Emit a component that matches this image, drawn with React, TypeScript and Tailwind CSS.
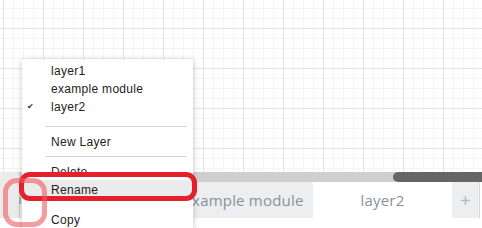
import { Plus } from "lucide-react";

const layers = ["layer1", "example module", "layer2"];
const active = "layer2";

const gridBg =
  "[background-image:linear-gradient(to_right,#e4e4e4_1px,transparent_1px),linear-gradient(to_bottom,#e4e4e4_1px,transparent_1px),linear-gradient(to_right,#f4f4f4_1px,transparent_1px),linear-gradient(to_bottom,#f4f4f4_1px,transparent_1px)] [background-size:40px_40px,40px_40px,10px_10px,10px_10px] [background-position:3px_28px,3px_28px,3px_8px,3px_8px]";

const MenuItem = ({ label, checked, hover, className = "h-[18px]" }: { label: string; checked?: boolean; hover?: boolean; className?: string }) => (
  <div className={`relative flex items-center pl-[29px] ${className} ${hover ? "bg-[#ebebeb]" : ""}`}>
    {checked && <span className="absolute left-[5px] text-[8px] text-[#333]">✔</span>}
    <span>{label}</span>
  </div>
);

const Separator = ({ className }: { className: string }) => (
  <div className={`ml-[24px] mr-[7px] h-px bg-[#d0d0d0] ${className}`} />
);

const App = () => {
  return (
    <div className="relative w-[482px] h-[228px] overflow-hidden bg-white font-['Liberation_Sans',Arial,sans-serif]">
      <div className={`h-[172px] ${gridBg}`} />

      <div className="flex h-[46px]">
        <div className="relative w-[20px] bg-[#ebebeb] border-r border-[#cfcfcf]">
          <div className="absolute right-[-2px] top-[25px] w-[2px] h-[7px] bg-[#aaaaaa]" />
        </div>
        <div className="flex-1 flex flex-col">
          <div className="h-[10px] bg-[#cfcfcf] flex justify-end">
            <div className="w-[89px] bg-[#666666] rounded-l-full" />
          </div>
          <div className="flex-1 flex bg-[#eceef0] font-['Open_Sans',sans-serif] text-[15px] tracking-[0.2px] text-[#8a9298]">
            {layers.map((name, i) => (
              <div
                key={name}
                className={`flex items-center justify-center ${i === 0 ? "flex-1" : "w-[139px]"} ${name === active ? "bg-white" : ""}`}
              >
                {name}
              </div>
            ))}
            <div className="w-[28px] flex items-center justify-center border-r border-[#dcdcdc] text-[#b8bcc0]">
              <Plus size={13} strokeWidth={3} />
            </div>
            <div className="w-[2px] bg-white" />
          </div>
        </div>
      </div>

      <div className="absolute left-[22px] top-[59px] w-[171px] h-[190px] bg-white rounded-[3px] shadow-[0_1px_6px_rgba(0,0,0,0.22)] pt-[3px] text-[12px] tracking-[0.3px] text-[#222]">
        {layers.map((name) => (
          <MenuItem key={name} label={name} checked={name === active} />
        ))}
        <Separator className="mt-[10px] mb-[6px]" />
        <MenuItem label="New Layer" />
        <Separator className="mt-[5px] mb-[6px]" />
        <MenuItem label="Delete" className="h-[17px]" />
        <MenuItem label="Rename" hover className="h-[20px]" />
        <MenuItem label="Copy" className="h-[18px] mt-[11px]" />
      </div>

      <div className="absolute left-[19px] top-[172px] w-[178px] h-[29px] border-[5px] border-[#e3202b] rounded-[11px]" />
      <div className="absolute left-[3px] top-[178px] w-[44px] h-[49px] border-[5px] border-[rgba(238,90,95,0.6)] rounded-[14px]" />
    </div>
  );
};

export default App;
